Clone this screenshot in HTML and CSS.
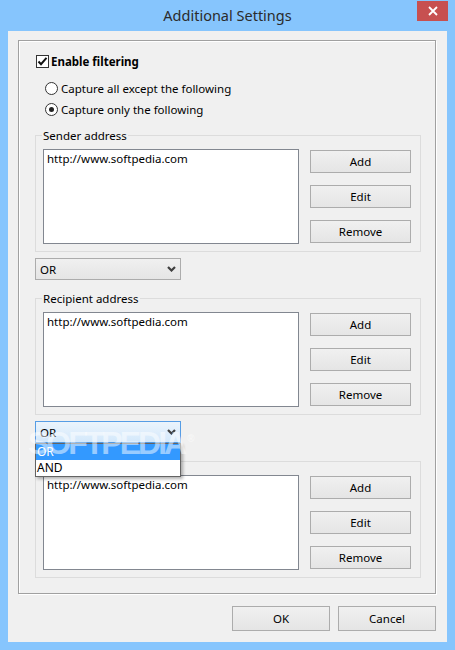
FILE: index.html
```html
<!DOCTYPE html>
<html lang="en">
<head>
    <meta charset="UTF-8">
    <title>Additional Settings</title>
    <link rel="stylesheet" href="styles.css">
</head>
<body>
<div class="window">
    <div class="titlebar">
        <span class="title">Additional Settings</span>
        <span class="close">
            <svg width="10" height="10" viewBox="0 0 10 10"><path d="M1 1L9 9M9 1L1 9" stroke="#fff" stroke-width="1.8"/></svg>
        </span>
    </div>

    <div class="client">
        <div class="outer-group">
            <label class="check-row">
                <span class="checkbox">
                    <svg width="11" height="11" viewBox="0 0 11 11"><path d="M1.5 5.5L4 8.2L9.5 1.8" stroke="#111" stroke-width="2" fill="none"/></svg>
                </span>
                Enable filtering
            </label>

            <div class="radios">
                <label class="radio-row"><span class="radio"></span>Capture all except the following</label>
                <label class="radio-row"><span class="radio checked"></span>Capture only the following</label>
            </div>

            <fieldset class="addr-group">
                <legend>Sender address</legend>
                <div class="addr-body">
                    <div class="listbox">http://www.softpedia.com</div>
                    <div class="side-buttons">
                        <button class="btn">Add</button>
                        <button class="btn">Edit</button>
                        <button class="btn">Remove</button>
                    </div>
                </div>
            </fieldset>

            <div class="combo">
                <span>OR</span>
                <svg width="9" height="6" viewBox="0 0 9 6"><path d="M1 1L4.5 4.5L8 1" stroke="#404040" stroke-width="2.2" fill="none"/></svg>
            </div>

            <fieldset class="addr-group">
                <legend>Recipient address</legend>
                <div class="addr-body">
                    <div class="listbox">http://www.softpedia.com</div>
                    <div class="side-buttons">
                        <button class="btn">Add</button>
                        <button class="btn">Edit</button>
                        <button class="btn">Remove</button>
                    </div>
                </div>
            </fieldset>

            <div class="combo-wrap">
                <div class="combo open">
                    <span>OR</span>
                    <svg width="9" height="6" viewBox="0 0 9 6"><path d="M1 1L4.5 4.5L8 1" stroke="#404040" stroke-width="2.2" fill="none"/></svg>
                </div>
                <ul class="dropdown">
                    <li class="selected">OR</li>
                    <li>AND</li>
                </ul>
            </div>

            <fieldset class="addr-group">
                <legend>Subject</legend>
                <div class="addr-body">
                    <div class="listbox">http://www.softpedia.com</div>
                    <div class="side-buttons">
                        <button class="btn">Add</button>
                        <button class="btn">Edit</button>
                        <button class="btn">Remove</button>
                    </div>
                </div>
            </fieldset>
        </div>

        <div class="dialog-buttons">
            <button class="btn wide">OK</button>
            <button class="btn wide">Cancel</button>
        </div>
    </div>

    <div class="watermark">SOFTPEDIA<sup>®</sup></div>
</div>
</body>
</html>
```

FILE: styles.css
```css
body {
    margin: 0;
    font-family: "Noto Sans", "Open Sans", sans-serif;
    font-size: 11.5px;
    color: #000;
}
.window {
    position: relative;
    width: 455px;
    height: 650px;
    background-color: #86c5fd;
    display: flex;
    flex-direction: column;
    overflow: hidden;
}
.titlebar {
    position: relative;
    height: 31px;
    flex-shrink: 0;
    display: flex;
    align-items: center;
    justify-content: center;
}
.title {
    font-size: 14.5px;
    color: #2b2b2b;
    margin-top: -1px;
}
.close {
    position: absolute;
    left: 417px;
    top: 1px;
    width: 31px;
    height: 20px;
    background-color: #c75050;
    display: flex;
    align-items: center;
    justify-content: center;
}
.client {
    margin: 0 8px;
    width: 439px;
    height: 611px;
    box-sizing: border-box;
    padding: 9px 11px 0 10px;
    background-color: #f0f0f0;
}
.outer-group {
    border: 1px solid #a0a0a0;
    box-shadow: inset 1px 1px 0 #fff, 1px 1px 0 #fff;
    padding: 13px 14px 15px 16px;
}
.check-row {
    display: flex;
    align-items: center;
    height: 15px;
    margin-left: 1px;
    font-weight: bold;
}
.checkbox {
    width: 13px;
    height: 13px;
    box-sizing: border-box;
    border: 1px solid #333;
    background-color: #fff;
    margin-right: 2px;
    display: flex;
    align-items: center;
    justify-content: center;
}
.radios {
    margin: 12px 0 0 10px;
    display: flex;
    flex-direction: column;
    gap: 6px;
}
.radio-row {
    display: flex;
    align-items: center;
    height: 15px;
}
.radio {
    width: 13px;
    height: 13px;
    box-sizing: border-box;
    border: 1px solid #333;
    border-radius: 50%;
    background-color: #fff;
    margin-right: 3px;
    display: flex;
    align-items: center;
    justify-content: center;
}
.radio.checked::after {
    content: "";
    width: 5px;
    height: 5px;
    border-radius: 50%;
    background-color: #222;
}
.addr-group {
    margin: 11px 0 0 0;
    border: 1px solid #dcdcdc;
    padding: 6px 9px 7px 7px;
    min-width: 0;
}
.addr-group legend {
    line-height: 15px;
    padding: 0 1px;
    margin-left: -1px;
}
.addr-body {
    display: flex;
    align-items: flex-start;
}
.listbox {
    width: 256px;
    height: 95px;
    box-sizing: border-box;
    border: 1px solid #828790;
    background-color: #fff;
    padding: 1px 3px;
}
.side-buttons {
    display: flex;
    flex-direction: column;
    gap: 12px;
    margin: 1px 0 0 11px;
}
.btn {
    width: 101px;
    height: 23px;
    padding: 0;
    border: 1px solid #acacac;
    background: linear-gradient(#f0f0f0, #e5e5e5);
    font: inherit;
    color: #000;
}
.btn.wide {
    width: 98px;
    height: 25px;
}
.combo {
    width: 146px;
    height: 22px;
    box-sizing: border-box;
    margin-top: 6px;
    border: 1px solid #acacac;
    background: linear-gradient(#f0f0f0, #e5e5e5);
    display: flex;
    align-items: center;
    justify-content: space-between;
    padding: 0 4px 0 4px;
}
.combo-wrap {
    position: relative;
    margin-top: 6px;
}
.combo.open {
    margin-top: 0;
    border-color: #569de5;
    background: linear-gradient(#ebf4fc, #d3e8fb);
}
.dropdown {
    position: absolute;
    left: 0;
    top: 22px;
    width: 146px;
    box-sizing: border-box;
    margin: 0;
    padding: 0;
    list-style: none;
    border: 1px solid #646464;
    background-color: #fff;
    box-shadow: 2px 2px 3px rgba(0, 0, 0, 0.3);
    z-index: 2;
}
.dropdown li {
    height: 16px;
    line-height: 16px;
    padding-left: 1px;
    font-size: 12px;
}
.dropdown li.selected {
    background-color: #3399ff;
    color: #fff;
}
.dialog-buttons {
    display: flex;
    justify-content: flex-end;
    gap: 8px;
    margin-top: 12px;
}
.watermark {
    position: absolute;
    left: 28px;
    top: 425px;
    font-family: "Liberation Sans", sans-serif;
    font-weight: bold;
    font-size: 32px;
    letter-spacing: -3px;
    color: rgba(255, 255, 255, 0.5);
    pointer-events: none;
    z-index: 3;
}
.watermark sup {
    font-size: 10px;
    letter-spacing: 0;
    margin-left: 3px;
}
```
